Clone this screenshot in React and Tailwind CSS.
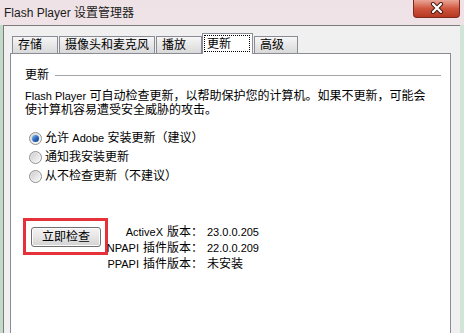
import React from 'react';

const L = ({ children }) => <span className="text-[11px]">{children}</span>;

const Radio = ({ checked }) => (
  <span className="w-[13px] h-[13px] rounded-full border border-[#8e8f8f] bg-gradient-to-br from-[#dcdcdc] to-[#ffffff] flex items-center justify-center shrink-0">
    <span className="w-[9px] h-[9px] rounded-full bg-gradient-to-br from-[#cfcfcf] to-[#f7f7f7] flex items-center justify-center">
      {checked && (
        <span className="w-[7px] h-[7px] rounded-full bg-gradient-to-br from-[#8ec0f0] via-[#2f6cc0] to-[#123f86]" />
      )}
    </span>
  </span>
);

const Tab = ({ label, className }) => (
  <div
    className={`mt-[3px] h-[17px] border border-b-0 border-[#898c95] bg-gradient-to-b from-[#f6f6f6] to-[#d9d9d9] flex items-center pl-[5px] ${className}`}
  >
    {label}
  </div>
);

const versions = [
  { latin: 'ActiveX', cjk: '版本：', value: <L>23.0.0.205</L> },
  { latin: 'NPAPI', cjk: '插件版本：', value: <L>22.0.0.209</L> },
  { latin: 'PPAPI', cjk: '插件版本：', value: '未安装' },
];

export default function App() {
  return (
    <div
      className="w-[464px] h-[333px] overflow-hidden flex flex-col bg-gradient-to-b from-[#efe2e6] to-[#eceff1] text-[12px] leading-[14px] text-black"
      style={{ fontFamily: '"Liberation Sans", "Noto Sans CJK SC", sans-serif' }}
    >
      {/* title bar */}
      <div className="relative h-[25px] shrink-0 flex items-center pl-[4px] text-[#1b1b1b]">
        <span>Flash Player 设置管理器</span>
        <div className="absolute right-[4px] top-0 w-[47px] h-[18px] rounded-b-[4px] border border-t-0 border-[#7d2a1e] bg-gradient-to-b from-[#e9a595] via-[#d0563f] to-[#b63822] flex items-center justify-center">
          <svg width="14" height="12" viewBox="0 0 14 12" className="-mt-[2px]">
            <path d="M3 2 L11 10 M11 2 L3 10" stroke="#4a1d14" strokeWidth="4.2" strokeLinecap="round" />
            <path d="M3 2 L11 10 M11 2 L3 10" stroke="#ffffff" strokeWidth="2.2" strokeLinecap="round" />
          </svg>
        </div>
      </div>

      <div className="flex-1 flex min-h-0">
        <div className="w-[3px] bg-[#c3d9ca]" />
        {/* client area */}
        <div className="w-[457px] border-l border-t border-[#7c7c7c] bg-[#f0f0f0] pl-[6px] pt-[7px]">
          {/* tabs */}
          <div className="h-[20px] ml-[2px] flex items-start gap-[1px]">
            <Tab label="存储" className="w-[46px]" />
            <Tab label="摄像头和麦克风" className="w-[96px]" />
            <Tab label="播放" className="w-[46px]" />
            <div className="relative z-10 -ml-[1px] w-[51px] h-[21px] border border-b-0 border-[#898c95] bg-white">
              <div className="absolute left-[1px] top-[1px] w-[46px] h-[17px] border border-dotted border-black flex items-center pl-[2px]">
                更新
              </div>
            </div>
            <Tab label="高级" className="w-[44px]" />
          </div>

          {/* panel */}
          <div className="w-[441px] h-[300px] border border-[#898c95] bg-white pl-[14px] pt-[14px]">
            <div className="h-[14px] flex items-center pr-[9px]">
              <span>更新</span>
              <div className="flex-1 h-px bg-[#a5a5a5] ml-[6px]" />
            </div>

            <div className="mt-[7px]">
              <div className="whitespace-nowrap">
                <L>Flash Player</L> 可自动检查更新，以帮助保护您的计算机。如果不更新，可能会
              </div>
              <div>使计算机容易遭受安全威胁的攻击。</div>
            </div>

            <div className="mt-[12px] flex flex-col gap-[1px] pl-[4px]">
              <div className="h-[18px] flex items-center gap-[3px]">
                <Radio checked />
                <span>
                  允许 <L>Adobe</L> 安装更新（建议）
                </span>
              </div>
              <div className="h-[18px] flex items-center gap-[3px]">
                <Radio />
                <span>通知我安装更新</span>
              </div>
              <div className="h-[18px] flex items-center gap-[3px]">
                <Radio />
                <span>从不检查更新（不建议）</span>
              </div>
            </div>

            <div className="mt-[33px] -ml-[2px] flex items-start">
              <div className="w-[85px] h-[37px] border-[3px] border-[#e5323a] pl-[5px] pt-[6px] shrink-0">
                <button className="w-[70px] h-[20px] rounded-[3px] border border-[#707070] bg-gradient-to-b from-[#f3f3f3] via-[#e6e6e6] to-[#d2d2d2] flex items-center justify-center shadow-[inset_0_0_0_1px_#fcfcfc]">
                  立即检查
                </button>
              </div>
              <div className="mt-[6px] flex flex-col">
                {versions.map((v) => (
                  <div key={v.latin} className="h-[16px] flex items-center">
                    <div className="w-[95px] flex justify-end whitespace-nowrap">
                      <L>{v.latin}</L>
                      <span className="ml-[4px]">{v.cjk}</span>
                    </div>
                    <div className="pl-[4px] whitespace-nowrap">{v.value}</div>
                  </div>
                ))}
              </div>
            </div>
          </div>
        </div>
        <div className="flex-1 bg-[#d0e4d7]" />
      </div>
    </div>
  );
}
